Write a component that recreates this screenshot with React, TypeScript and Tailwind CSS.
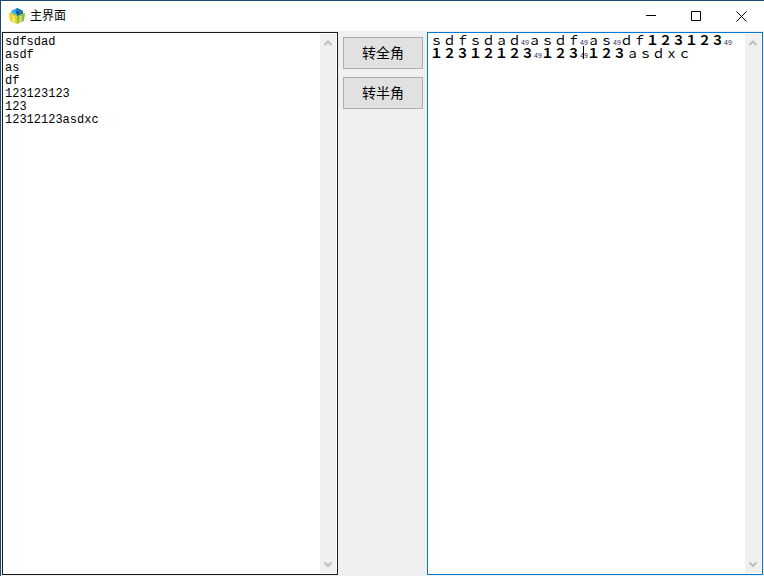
import React, { useState } from 'react';

const LEFT_TEXT = `sdfsdad
asdf
as
df
123123123
123
12312123asdxc`;

// "|" marks a control character, which the font shows as a tiny code.
// "^" is the same with the caret on it.
const RIGHT_LINES = [
  'ｓｄｆｓｄａｄ|ａｓｄｆ|ａｓ|ｄｆ１２３１２３|',
  '１２３１２１２３|１２３^１２３ａｓｄｘｃ',
];

const AppLogo = () => (
  <svg className="w-4 h-4 ml-2 mr-[5px] shrink-0" viewBox="0 0 16 16" aria-hidden="true">
    <path d="M8 0 14 3 8 7 2 3Z" fill="#35a7e0" />
    <path d="M8 0 14 3 11 4.500 7 2Z" fill="#1273ae" />
    <path d="M7 3 11 4.500 8 7Z" fill="#0a3f75" />
    <path d="M2 3 8 7V9L2 6Z" fill="#4db8e8" />
    <path d="M14 3 8 7V9L14 6Z" fill="#0b5f9c" />
    <path d="M0 5 3 5.500 8 8V16L1 13Z" fill="#f5d11a" />
    <path d="M16 5 13 5.500 8 8V16L15 13Z" fill="#8fbf3a" />
    <path d="M3 8 6 9.500M3 10.500 6 12M3 12.500 6 14" fill="none" stroke="#fffbd6" />
    <path d="M10 9.500 13 8M10 12 13 10.500M10 14 13 12.500" fill="none" stroke="#ecf7d0" />
  </svg>
);

const ScrollBar = () => (
  <div className="flex flex-col justify-between w-4 my-px mr-px shrink-0 bg-[#f0f0f0]">
    <button aria-label="Scroll up" className="flex items-center justify-center h-[18px]">
      <svg className="w-2 h-2" viewBox="0 0 8 8" fill="none" stroke="#bfbfbf" strokeWidth="2">
        <path d="M0.500 6 4 2.500 7.500 6" />
      </svg>
    </button>
    <button aria-label="Scroll down" className="flex items-center justify-center h-[18px]">
      <svg className="w-2 h-2" viewBox="0 0 8 8" fill="none" stroke="#bfbfbf" strokeWidth="2">
        <path d="M0.500 2.500 4 6 7.500 2.500" />
      </svg>
    </button>
  </div>
);

const ControlMark = ({ caret }: { caret: boolean }) => (
  <span className="relative inline-block w-[7px] text-[7px] leading-[7px] text-center text-[#1f2a55] font-['Liberation_Sans',sans-serif]">
    49
    {caret && <span className="absolute left-[3px] -top-1.5 w-px h-[13px] bg-black" />}
  </span>
);

const RichLine = ({ text }: { text: string }) => (
  <div className="h-[13px]">
    {text.split(/([|^]|[１２３]+)/).map((part, i) => {
      if (part === '|' || part === '^') {
        return <ControlMark key={i} caret={part === '^'} />;
      }
      return /[１２３]/.test(part) ? <b key={i}>{part}</b> : <span key={i}>{part}</span>;
    })}
  </div>
);

const App = () => {
  const [source, setSource] = useState(LEFT_TEXT);

  return (
    <div className="flex flex-col h-screen bg-[#f0f0f0] border-t border-l border-[#1c4a6e] text-black font-['Liberation_Sans','Noto_Sans_CJK_SC',sans-serif]">
      <header className="flex items-center h-[30px] shrink-0 bg-white">
        <AppLogo />
        <h1 className="text-[12px] leading-4">主界面</h1>
        <div className="flex ml-auto h-full">
          <button aria-label="Minimize" className="flex items-center justify-center w-[45px]">
            <svg className="w-[11px] h-[11px]" viewBox="0 0 11 11" fill="none" stroke="#000">
              <path d="M0 4.500H10" />
            </svg>
          </button>
          <button aria-label="Maximize" className="flex items-center justify-center w-[45px]">
            <svg className="w-[11px] h-[11px]" viewBox="0 0 11 11" fill="none" stroke="#000">
              <path d="M0.500 0.500H9.500V9.500H0.500Z" />
            </svg>
          </button>
          <button aria-label="Close" className="flex items-center justify-center w-[45px]">
            <svg className="w-[11px] h-[11px]" viewBox="0 0 11 11" fill="none" stroke="#000">
              <path d="M0.500 0.500 10.500 10.500M10.500 0.500 0.500 10.500" />
            </svg>
          </button>
        </div>
      </header>

      <main className="flex flex-1 min-h-0 p-px">
        <div className="flex flex-1 min-w-0 bg-white border border-[#1a1a1a]">
          <textarea
            aria-label="原文"
            value={source}
            onChange={(e) => setSource(e.target.value)}
            spellCheck={false}
            className="flex-1 min-w-0 resize-none outline-none overflow-hidden px-[2px] py-[3px] text-[12px] leading-[13px] font-['Liberation_Mono',monospace]"
          />
          <ScrollBar />
        </div>

        <div className="flex flex-col gap-2 w-[89px] shrink-0 pl-[5px] pr-1 pt-[5px] text-[14px]">
          <button className="h-8 bg-[#e1e1e1] border border-[#adadad]">转全角</button>
          <button className="h-8 bg-[#e1e1e1] border border-[#adadad]">转半角</button>
        </div>

        <div className="flex flex-1 min-w-0 bg-white border border-[#0078d7]">
          <div
            role="textbox"
            aria-label="结果"
            aria-multiline="true"
            contentEditable
            suppressContentEditableWarning
            spellCheck={false}
            className="flex-1 min-w-0 outline-none whitespace-nowrap px-[2px] text-[13px] leading-[13px] font-['Noto_Sans_CJK_SC',sans-serif]"
          >
            {RIGHT_LINES.map((line) => (
              <RichLine key={line} text={line} />
            ))}
          </div>
          <ScrollBar />
        </div>
      </main>
    </div>
  );
};

export default App;
